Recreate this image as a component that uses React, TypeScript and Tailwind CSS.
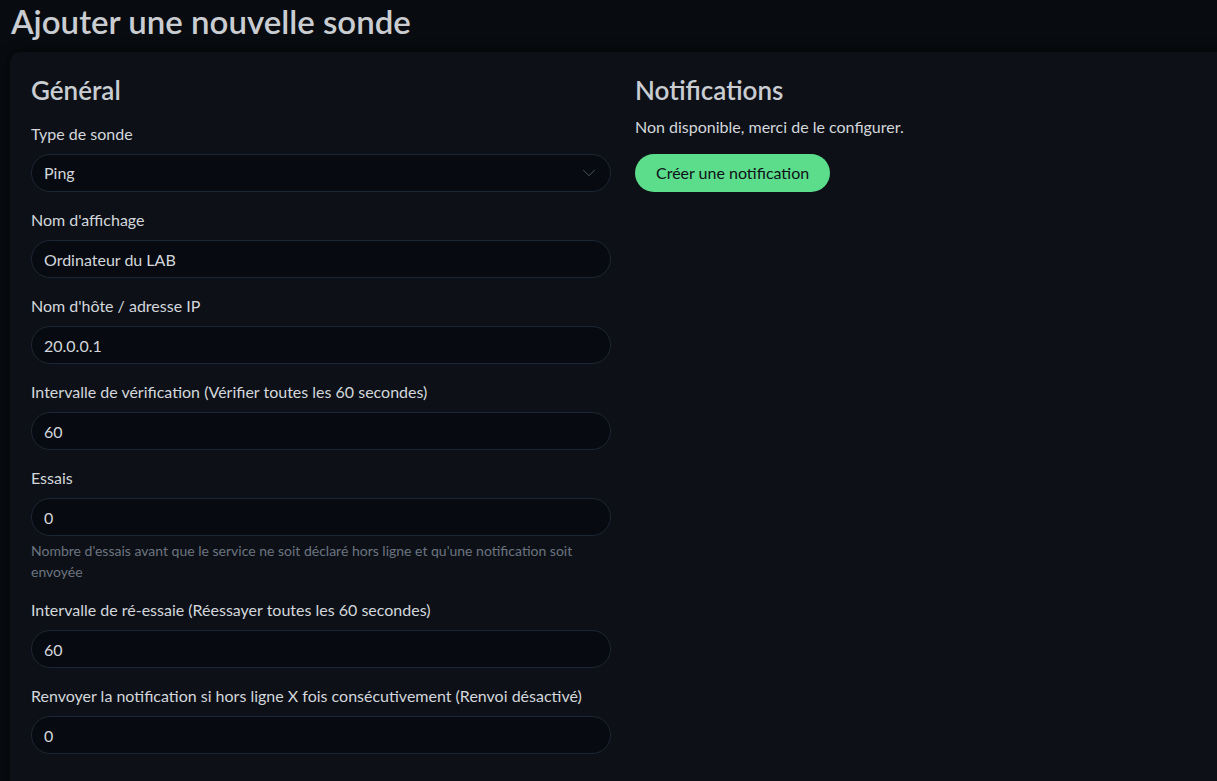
import { ChevronDown } from "lucide-react";

const fields = [
  { label: "Nom d'affichage", value: "Ordinateur du LAB" },
  { label: "Nom d'hôte / adresse IP", value: "20.0.0.1" },
  { label: "Intervalle de vérification (Vérifier toutes les 60 secondes)", value: "60" },
];

function Field({ label, value, help }: { label: string; value: string; help?: string }) {
  return (
    <div className="mb-4">
      <label className="mb-2 block h-6 text-[16px] leading-6 text-[#d3d7dc]">{label}</label>
      <input
        readOnly
        value={value}
        className="block h-[38px] w-full rounded-full border border-[#1d2634] bg-[#070a10] px-3 text-[16px] text-[#d3d7dc] outline-none"
      />
      {help && <div className="mt-1 text-[14px] leading-[21px] text-[#6c7480]">{help}</div>}
    </div>
  );
}

export default function App() {
  return (
    <div className="h-[781px] overflow-hidden bg-[#080b0f] font-['Lato',sans-serif]">
      <h1 className="h-[52px] pl-[11px] pt-[1px] text-[33px] font-semibold leading-[40px] text-[#c9cdd2]">
        Ajouter une nouvelle sonde
      </h1>

      <div className="ml-[10px] w-[1224px] rounded-[10px] bg-[#0d1117] pl-[21px] pr-[19px] pt-[19px] pb-6 shadow-[0_0_12px_rgba(0,0,0,0.5)]">
        <div className="grid grid-cols-2 gap-x-6">
          <div>
            <h2 className="mb-4 h-[35px] pt-[4px] text-[26px] font-semibold leading-[31px] text-[#c9cdd2]">Général</h2>

            <div className="mb-4">
              <label className="mb-2 block h-6 text-[16px] leading-6 text-[#d3d7dc]">Type de sonde</label>
              <div className="relative flex h-[38px] items-center rounded-full border border-[#1d2634] bg-[#070a10] px-3 text-[16px] text-[#d3d7dc]">
                Ping
                <ChevronDown size={22} strokeWidth={1} className="absolute right-[10px] text-[#525a66]" />
              </div>
            </div>

            {fields.map((f) => (
              <Field key={f.label} label={f.label} value={f.value} />
            ))}

            <Field
              label="Essais"
              value="0"
              help="Nombre d'essais avant que le service ne soit déclaré hors ligne et qu'une notification soit envoyée"
            />
            <Field label="Intervalle de ré-essaie (Réessayer toutes les 60 secondes)" value="60" />
            <Field
              label="Renvoyer la notification si hors ligne X fois consécutivement (Renvoi désactivé)"
              value="0"
            />
          </div>

          <div>
            <h2 className="mb-[9px] h-[35px] pt-[4px] text-[26px] font-semibold leading-[31px] text-[#c9cdd2]">Notifications</h2>
            <p className="mb-[15px] text-[16px] leading-6 text-[#d3d7dc]">Non disponible, merci de le configurer.</p>
            <button className="h-[38px] rounded-full bg-[#5cdd8b] px-[21px] text-[16px] text-[#0d1117]">
              Créer une notification
            </button>
          </div>
        </div>
      </div>
    </div>
  );
}
